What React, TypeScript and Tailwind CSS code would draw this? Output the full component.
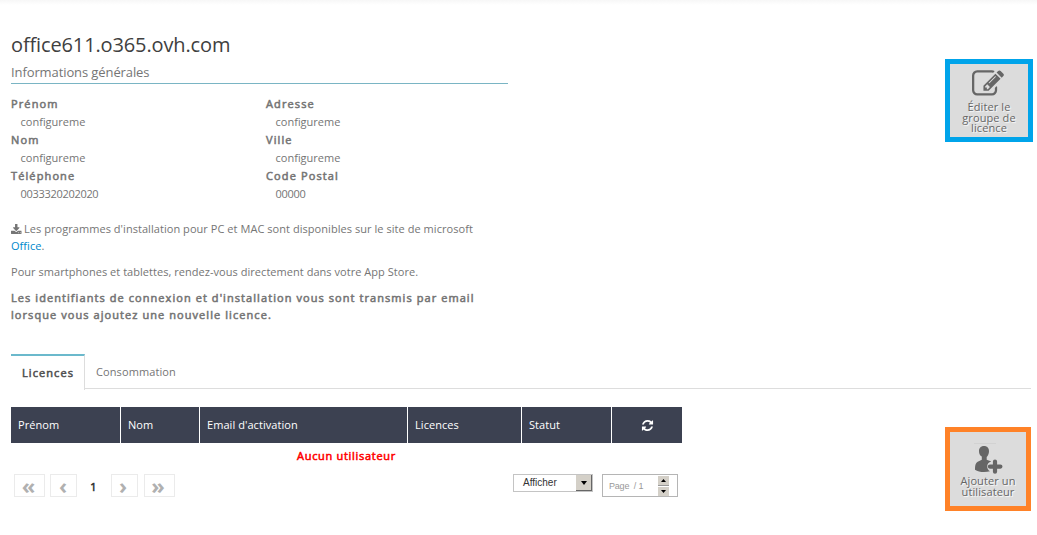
import type { ReactNode } from 'react';

const icons = {
  edit: {
    viewBox: '0 0 1792 1792',
    d: 'M888 1184l116-116-152-152-116 116v56h96v96h56zm440-720q-16-16-33 1l-350 350q-17 17-1 33t33-1l350-350q17-17 1-33zm80 594v190q0 119-84.5 203.5t-203.5 84.5h-832q-119 0-203.5-84.5t-84.5-203.5v-832q0-119 84.5-203.5t203.5-84.5h832q63 0 117 25 15 7 18 23 3 17-9 29l-49 49q-14 14-32 8-23-6-45-6h-832q-66 0-113 47t-47 113v832q0 66 47 113t113 47h832q66 0 113-47t47-113v-126q0-13 9-22l64-64q15-15 35-7t20 29zm-96-738l288 288-672 672h-288v-288zm444 132l-92 92-288-288 92-92q28-28 68-28t68 28l152 152q28 28 28 68t-28 68z',
  },
  refresh: {
    viewBox: '0 0 1792 1792',
    d: 'M1639 1056q0 5-1 7-64 268-268 434.5t-478 166.5q-146 0-282.5-55t-243.5-157l-129 129q-19 19-45 19t-45-19-19-45v-448q0-26 19-45t45-19h448q26 0 45 19t19 45-19 45l-137 137q71 66 161 102t187 36q134 0 250-65t186-179q11-17 53-117 8-23 30-23h192q13 0 22.5 9.5t9.5 22.5zm25-800v448q0 26-19 45t-45 19h-448q-26 0-45-19t-19-45 19-45l138-138q-148-137-349-137-134 0-250 65t-186 179q-11 17-53 117-8 23-30 23h-199q-13 0-22.5-9.5t-9.5-22.5v-7q65-268 270-434.5t480-166.5q146 0 284 55.5t245 156.5l130-129q19-19 45-19t45 19 19 45z',
  },
  download: {
    viewBox: '64 0 1664 1536',
    d: 'M1344 1344q0-26-19-45t-45-19-45 19-19 45 19 45 45 19 45-19 19-45zm256 0q0-26-19-45t-45-19-45 19-19 45 19 45 45 19 45-19 19-45zm128-224v320q0 40-28 68t-68 28h-1472q-40 0-68-28t-28-68v-320q0-40 28-68t68-28h465l135 136q58 56 136 56t136-56l136-136h464q40 0 68 28t28 68zm-325-569q17 41-14 70l-448 448q-18 19-45 19t-45-19l-448-448q-31-29-14-70 17-39 59-39h256v-448q0-26 19-45t45-19h256q26 0 45 19t19 45v448h256q42 0 59 39z',
  },
};

function Icon({ name, className }: { name: keyof typeof icons; className: string }) {
  return (
    <svg viewBox={icons[name].viewBox} preserveAspectRatio="none" fill="currentColor" className={className}>
      <path d={icons[name].d} />
    </svg>
  );
}

function AddUserIcon() {
  return (
    <svg viewBox="0 0 30 32" className="h-8 w-[30px]">
      <path d="M1 1.500h22" stroke="#cfcfcf" strokeWidth="0.8" />
      <path
        fill="#666"
        d="M11 4c3.300 0 5 2.200 5 5.200 0 2.600-1 4.500-2.300 5.700v2.800c1.800.9 3.400 1 4.500 1.900-2.500.6-4 2.400-4 4.900 0 2.100 1.100 3.900 2.800 4.700-1.800.6-3.800.8-6 .8-3.500 0-6.700-.7-9-2.300 0-5 .9-6.800 2.700-7.900 1.400-.8 2.800-1.300 4.100-2.100v-3.100C7 13.700 6 11.800 6 9.200 6 6.200 7.700 4 11 4z"
      />
      <path d="M22 19.500v10.200M16.900 24.600h10.500" stroke="#666" strokeWidth="4.200" strokeLinecap="round" />
    </svg>
  );
}

function Strong({ className = 'tracking-[1.070px]', children }: { className?: string; children: ReactNode }) {
  return <strong className={`font-normal [-webkit-text-stroke:0.55px_currentColor] ${className}`}>{children}</strong>;
}

function Field({ label, value }: { label: string; value: string }) {
  const spacing = /^\d+$/.test(value) ? 'tracking-[-0.3px]' : 'tracking-[0px]';
  return (
    <>
      <dt className="h-[18px]">
        <Strong className="tracking-[1.120px]">{label}</Strong>
      </dt>
      <dd className={`h-[18px] pl-[9.500px] ${spacing}`}>{value}</dd>
    </>
  );
}

function ActionButton({ className, children }: { className: string; children: ReactNode }) {
  return (
    <button
      className={`flex flex-col items-center border-[5px] bg-[#dcdcdc] text-center text-[11px] leading-[10.500px] tracking-[0.100px] text-[#666] [text-shadow:1px_1px_1px_#fff] ${className}`}
    >
      {children}
    </button>
  );
}

function PagerButton({ className, children }: { className: string; children: string }) {
  return (
    <button
      className={`flex h-[23px] justify-center border border-[#ebebeb] text-[22px] leading-[20px] font-bold tracking-[-1px] text-[#b0b0b0] ${className}`}
    >
      {children}
    </button>
  );
}

const columns = [
  { label: 'Prénom', width: 'w-[110px]' },
  { label: 'Nom', width: 'w-[79px]' },
  { label: "Email d'activation", width: 'w-[208px]' },
  { label: 'Licences', width: 'w-[114px]' },
  { label: 'Statut', width: 'w-[90px]' },
];

export default function App() {
  return (
    <div className="h-[535px] w-[1037px] overflow-hidden bg-white font-['Open_Sans',sans-serif] text-[11px] leading-[17px] text-[#757575]">
      <div className="h-[5px] bg-linear-to-b from-[#f7f7f7] to-white" />
      <section className="flex h-[349px] items-start justify-between pr-1 pl-[11px]">
        <div className="w-[497px] pt-[26px]">
          <h1 className="h-[31px] text-[20px] leading-[28px] tracking-[-0.13px] text-[#404040]">office611.o365.ovh.com</h1>
          <h2 className="h-[22px] border-b border-[#7ab5c4] text-[13px] leading-[21px] tracking-[-0.1px]">
            Informations générales
          </h2>
          <div className="flex pt-[11px] leading-[18px]">
            <dl className="w-[255px]">
              <Field label="Prénom" value="configureme" />
              <Field label="Nom" value="configureme" />
              <Field label="Téléphone" value="0033320202020" />
            </dl>
            <dl>
              <Field label="Adresse" value="configureme" />
              <Field label="Ville" value="configureme" />
              <Field label="Code Postal" value="00000" />
            </dl>
          </div>
          <p className="mt-[17px] tracking-[0.05px]">
            <Icon name="download" className="mr-[2.500px] inline h-[10px] w-[10.500px] align-[-1px]" />
            <span>Les programmes d'installation pour PC et MAC sont disponibles sur le site de microsoft</span>
            <br />
            <a className="text-[#0088cc]">Office</a>.
          </p>
          <p className="mt-[9px] tracking-[0.04px]">
            Pour smartphones et tablettes, rendez-vous directement dans votre App Store.
          </p>
          <p className="mt-[9px] whitespace-nowrap">
            <Strong>
              Les identifiants de connexion et d'installation vous sont transmis par email
              <br />
              lorsque vous ajoutez une nouvelle licence.
            </Strong>
          </p>
        </div>
        <ActionButton className="mt-[54px] h-[83px] w-[88px] border-[#00a4ea]">
          <Icon name="edit" className="mt-[4px] mr-[2px] mb-[2px] h-[32px] w-[32px] shrink-0" />
          <span>
            Éditer le
            <br />
            groupe de
            <br />
            licence
          </span>
        </ActionButton>
      </section>

      <nav className="mr-[6px] ml-[11px] flex h-[36px]">
        <div className="h-[36px] w-[74px] border-t-2 border-r border-t-[#6bb9cc] border-r-[#ddd] pt-[8px] pl-[11px] text-[#505050]">
          <Strong>Licences</Strong>
        </div>
        <div className="h-[35px] flex-1 border-b border-[#ddd] pt-[9px] pl-[11px] tracking-[0.1px]">Consommation</div>
      </nav>

      <section className="flex items-start justify-between pr-[6px] pl-[11px]">
        <div className="w-[671px] pt-[17px]">
          <div className="flex h-[36px] bg-[#3c4151] leading-[36px] tracking-[0.06px] text-white">
            {columns.map((column) => (
              <div key={column.label} className={`border-r border-white pl-[7px] ${column.width}`}>
                {column.label}
              </div>
            ))}
            <div className="flex flex-1 items-center justify-center">
              <Icon name="refresh" className="h-[13px] w-[13px]" />
            </div>
          </div>
          <p className="mt-[4px] text-center text-[#f00]">
            <Strong className="tracking-[0.7px]">Aucun utilisateur</Strong>
          </p>
          <div className="mt-[10px] flex items-start pl-[3px]">
            <PagerButton className="w-[31px] pr-[3px]">«</PagerButton>
            <PagerButton className="ml-[5px] w-[27px] pr-[2px]">‹</PagerButton>
            <span className="w-[34px] pt-[4px] text-center text-[#333]">
              <Strong>1</Strong>
            </span>
            <PagerButton className="w-[27px] pr-[4px]">›</PagerButton>
            <PagerButton className="ml-[6px] w-[31px] pr-[4px]">»</PagerButton>
            <div className="ml-[338px] flex h-[18px] w-[80px] justify-between border border-[#c4c4c4] pl-[9px] font-['Liberation_Sans',sans-serif] text-[10px] leading-[16px] text-[#333]">
              Afficher
              <span className="flex w-[16px] items-center justify-center border-r border-b border-[#666] bg-[#d4d0c8]">
                <svg viewBox="0 0 6 4" className="h-[4px] w-[6px]">
                  <path d="M0 0h6L3 4z" />
                </svg>
              </span>
            </div>
            <div className="ml-[9px] flex h-[23px] w-[76px] justify-between border border-[#b5b5b5] pr-[8px] pl-[6px] font-['Liberation_Sans',sans-serif] text-[9px] leading-[22px] tracking-[-0.2px] text-[#999]">
              <span>Page&nbsp; / 1</span>
              <span className="flex w-[11px] flex-col gap-px pt-[1px]">
                <span className="flex h-[10px] items-center justify-center border-b border-[#999] bg-[#d4d0c8]">
                  <svg viewBox="0 0 5 3" className="h-[3px] w-[5px]">
                    <path d="M0 3h5L2.500 0z" />
                  </svg>
                </span>
                <span className="flex h-[10px] items-center justify-center bg-[#d4d0c8]">
                  <svg viewBox="0 0 5 3" className="h-[3px] w-[5px]">
                    <path d="M0 0h5L2.500 3z" />
                  </svg>
                </span>
              </span>
            </div>
          </div>
        </div>
        <ActionButton className="mt-[37px] h-[84px] w-[86px] border-[#ff8228]">
          <span className="mt-[10px] h-[34px]">
            <AddUserIcon />
          </span>
          <span>
            Ajouter un
            <br />
            utilisateur
          </span>
        </ActionButton>
      </section>
    </div>
  );
}
